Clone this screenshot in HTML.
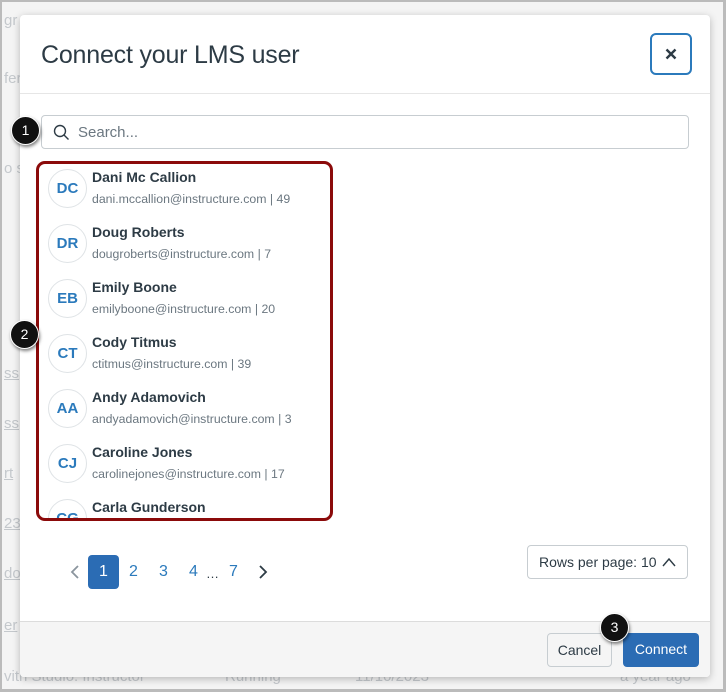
<!DOCTYPE html>
<html><head><style>
*{box-sizing:border-box;margin:0;padding:0}
body{width:726px;height:692px;position:relative;overflow:hidden;background:#fff;font-family:"Liberation Sans",sans-serif;}
.frame{position:absolute;left:0;top:0;width:726px;height:692px;border:2px solid #bbb;border-right-width:3px;border-bottom-width:3px;background:#f4f4f4}
.bg{position:absolute;color:#c4c8cc;font-size:15px}
.modal{position:absolute;left:20px;top:15px;width:690px;height:662px;background:#fff;border-radius:4px;box-shadow:0 2px 8px rgba(0,0,0,.25);overflow:hidden}
.title{position:absolute;left:21px;top:26px;font-size:25px;color:#2d3b45;letter-spacing:-0.2px}
.close{position:absolute;left:630px;top:18px;width:42px;height:42px;border:2px solid #2b7abc;border-radius:6px}
.hline{position:absolute;left:0;top:78px;width:690px;height:1px;background:#e6e6e6}
.search{position:absolute;left:21px;top:100px;width:648px;height:34px;border:1px solid #c7cdd1;border-radius:4px}
.search span{position:absolute;left:36px;top:8px;font-size:15px;color:#6b7780}
.list{position:absolute;left:16px;top:146px;width:297px;height:360px;border:3px solid #8b0a0a;border-radius:9px;overflow:hidden}
.row{position:absolute;left:0;height:55px;width:290px}
.av{position:absolute;left:9px;top:5px;width:39px;height:39px;border:1px solid #dfe3e6;border-radius:50%;color:#2b7abc;font-size:15px;font-weight:bold;text-align:center;line-height:37px}
.nm{position:absolute;left:53px;top:5px;font-size:14px;font-weight:bold;color:#2d3b45}
.em{position:absolute;left:53px;top:28px;font-size:12.3px;color:#6b7780}
.pg{position:absolute;top:548px;font-size:16px;color:#2b7abc}
.footer{position:absolute;left:0;top:606px;width:690px;height:56px;background:#f5f5f5;border-top:1px solid #dcdcdc}
.btn{position:absolute;height:34px;border-radius:4px;font-size:14px;line-height:32px;text-align:center}
.badge{position:absolute;width:29px;height:29px;border-radius:50%;background:#111;color:#fff;font-size:14px;text-align:center;line-height:27px;border:1px solid #fff;box-shadow:1px 2px 3px rgba(0,0,0,.5)}
</style></head><body>
<div class="frame"></div>
<div class="bg" style="left:4px;top:12px">gr</div>
<div class="bg" style="left:4px;top:70px">fer</div>
<div class="bg" style="left:4px;top:160px">o s</div>
<div class="bg" style="left:4px;top:365px;text-decoration:underline">ss</div>
<div class="bg" style="left:4px;top:415px;text-decoration:underline">ss</div>
<div class="bg" style="left:4px;top:465px;text-decoration:underline">rt</div>
<div class="bg" style="left:4px;top:515px;text-decoration:underline">23</div>
<div class="bg" style="left:4px;top:565px;text-decoration:underline">do</div>
<div class="bg" style="left:4px;top:617px;text-decoration:underline">er</div>
<div class="bg" style="left:4px;top:668px">vith Studio: Instructor</div>
<div class="bg" style="left:225px;top:668px">Running</div>
<div class="bg" style="left:355px;top:668px">11/10/2023</div>
<div class="bg" style="left:620px;top:668px">a year ago</div>
<div class="modal">
<div class="title">Connect your LMS user</div>
<div class="close"><svg style="position:absolute;left:13px;top:13px" width="12" height="12" viewBox="0 0 12 12"><path d="M1.5 1.5 L10.5 10.5 M10.5 1.5 L1.5 10.5" stroke="#2d3b45" stroke-width="2.4"/></svg></div>
<div class="hline"></div>
<div class="search"><svg style="position:absolute;left:11px;top:8px" width="17" height="17" viewBox="0 0 17 17"><circle cx="7" cy="7" r="5.5" fill="none" stroke="#2d3b45" stroke-width="1.4"/><line x1="11" y1="11" x2="15.5" y2="15.5" stroke="#2d3b45" stroke-width="1.4"/></svg><span>Search...</span></div>
<div class="list">
<div class="row" style="top:0"><div class="av">DC</div><div class="nm">Dani Mc Callion</div><div class="em">dani.mccallion@instructure.com | 49</div></div>
<div class="row" style="top:55px"><div class="av">DR</div><div class="nm">Doug Roberts</div><div class="em">dougroberts@instructure.com | 7</div></div>
<div class="row" style="top:110px"><div class="av">EB</div><div class="nm">Emily Boone</div><div class="em">emilyboone@instructure.com | 20</div></div>
<div class="row" style="top:165px"><div class="av">CT</div><div class="nm">Cody Titmus</div><div class="em">ctitmus@instructure.com | 39</div></div>
<div class="row" style="top:220px"><div class="av">AA</div><div class="nm">Andy Adamovich</div><div class="em">andyadamovich@instructure.com | 3</div></div>
<div class="row" style="top:275px"><div class="av">CJ</div><div class="nm">Caroline Jones</div><div class="em">carolinejones@instructure.com | 17</div></div>
<div class="row" style="top:330px"><div class="av">CG</div><div class="nm">Carla Gunderson</div></div>
</div>
<svg style="position:absolute;left:49px;top:549px" width="12" height="16" viewBox="0 0 12 16"><path d="M9 2 L3 8 L9 14" fill="none" stroke="#8b959e" stroke-width="1.8"/></svg>
<div style="position:absolute;left:68px;top:540px;width:31px;height:34px;background:#2b6cb4;border-radius:4px;color:#fff;font-size:16px;text-align:center;line-height:34px">1</div>
<div class="pg" style="left:109px">2</div>
<div class="pg" style="left:139px">3</div>
<div class="pg" style="left:169px">4</div>
<div class="pg" style="left:186px;color:#2d3b45;font-size:13px;top:551px">…</div>
<div class="pg" style="left:209px">7</div>
<svg style="position:absolute;left:237px;top:549px" width="12" height="16" viewBox="0 0 12 16"><path d="M3 2 L9 8 L3 14" fill="none" stroke="#2d3b45" stroke-width="1.8"/></svg>
<div class="btn" style="left:507px;top:530px;width:161px;border:1px solid #c7cdd1;color:#2d3b45;text-align:left;padding-left:11px">Rows per page: 10<svg style="position:absolute;left:133px;top:10px" width="16" height="12" viewBox="0 0 16 12"><path d="M2 10 L8 3 L14 10" fill="none" stroke="#2d3b45" stroke-width="1.4"/></svg></div>
<div class="footer">
<div class="btn" style="left:527px;top:11px;width:65px;border:1px solid #c7cdd1;background:#f5f5f5;color:#2d3b45">Cancel</div>
<div class="btn" style="left:603px;top:11px;width:76px;background:#2b6cb4;color:#fff">Connect</div>
</div>
</div>
<div class="badge" style="left:11px;top:116px">1</div>
<div class="badge" style="left:10px;top:320px">2</div>
<div class="badge" style="left:600px;top:613px">3</div>
</body></html>
